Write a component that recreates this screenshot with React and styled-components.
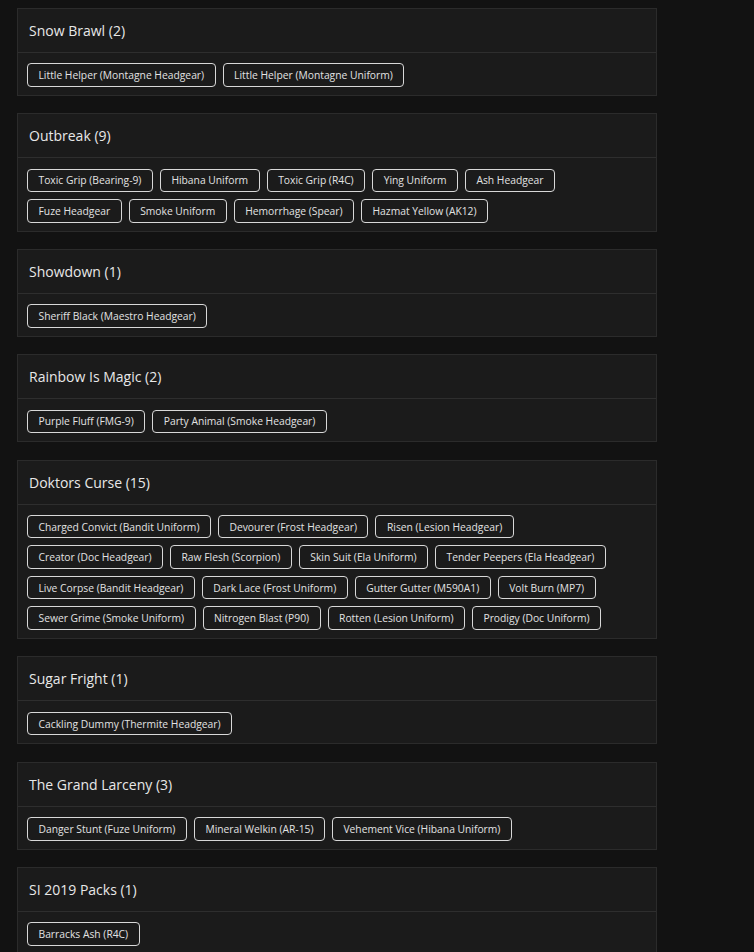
import React from "react";
import styled, { createGlobalStyle } from "styled-components";

const packs = [
  { name: "Snow Brawl", items: ["Little Helper (Montagne Headgear)", "Little Helper (Montagne Uniform)"] },
  {
    name: "Outbreak",
    items: [
      "Toxic Grip (Bearing-9)", "Hibana Uniform", "Toxic Grip (R4C)", "Ying Uniform", "Ash Headgear",
      "Fuze Headgear", "Smoke Uniform", "Hemorrhage (Spear)", "Hazmat Yellow (AK12)",
    ],
  },
  { name: "Showdown", items: ["Sheriff Black (Maestro Headgear)"] },
  { name: "Rainbow Is Magic", items: ["Purple Fluff (FMG-9)", "Party Animal (Smoke Headgear)"] },
  {
    name: "Doktors Curse",
    items: [
      "Charged Convict (Bandit Uniform)", "Devourer (Frost Headgear)", "Risen (Lesion Headgear)",
      "Creator (Doc Headgear)", "Raw Flesh (Scorpion)", "Skin Suit (Ela Uniform)", "Tender Peepers (Ela Headgear)",
      "Live Corpse (Bandit Headgear)", "Dark Lace (Frost Uniform)", "Gutter Gutter (M590A1)", "Volt Burn (MP7)",
      "Sewer Grime (Smoke Uniform)", "Nitrogen Blast (P90)", "Rotten (Lesion Uniform)", "Prodigy (Doc Uniform)",
    ],
  },
  { name: "Sugar Fright", items: ["Cackling Dummy (Thermite Headgear)"] },
  { name: "The Grand Larceny", items: ["Danger Stunt (Fuze Uniform)", "Mineral Welkin (AR-15)", "Vehement Vice (Hibana Uniform)"] },
  { name: "SI 2019 Packs", items: ["Barracks Ash (R4C)"] },
];

const GlobalStyle = createGlobalStyle`
  html, body {
    margin: 0;
    background: #121212;
    font-family: "Open Sans", "Liberation Sans", sans-serif;
  }
`;

const Page = styled.div`
  display: flex;
  flex-direction: column;
  gap: 17.5px;
  padding: 8px 17px;
`;

const Card = styled.section`
  width: 640px;
  box-sizing: border-box;
  background: #1b1b1b;
  border: 1px solid #2b2b2b;
`;

const Header = styled.div`
  height: 43px;
  display: flex;
  align-items: center;
  padding: 0 11px;
  border-bottom: 1px solid #2e2e2e;
  color: #e8e8e8;
  font-size: 14px;
  font-weight: 500;
`;

const Body = styled.div`
  display: flex;
  flex-wrap: wrap;
  gap: 7px;
  padding: 10.3px 9px 8px;
`;

const Tag = styled.span`
  height: 23.5px;
  box-sizing: border-box;
  display: inline-flex;
  align-items: center;
  padding: 0 10.5px;
  border: 1px solid #d8d8d8;
  border-radius: 4px;
  color: #e2e2e2;
  font-size: 10.3px;
  white-space: nowrap;
`;

const App = () => {
  return (
    <>
      <GlobalStyle />
      <Page>
        {packs.map((p) => (
          <Card key={p.name}>
            <Header>{p.name} ({p.items.length})</Header>
            <Body>
              {p.items.map((it) => (
                <Tag key={it}>{it}</Tag>
              ))}
            </Body>
          </Card>
        ))}
      </Page>
    </>
  );
};

export default App;
